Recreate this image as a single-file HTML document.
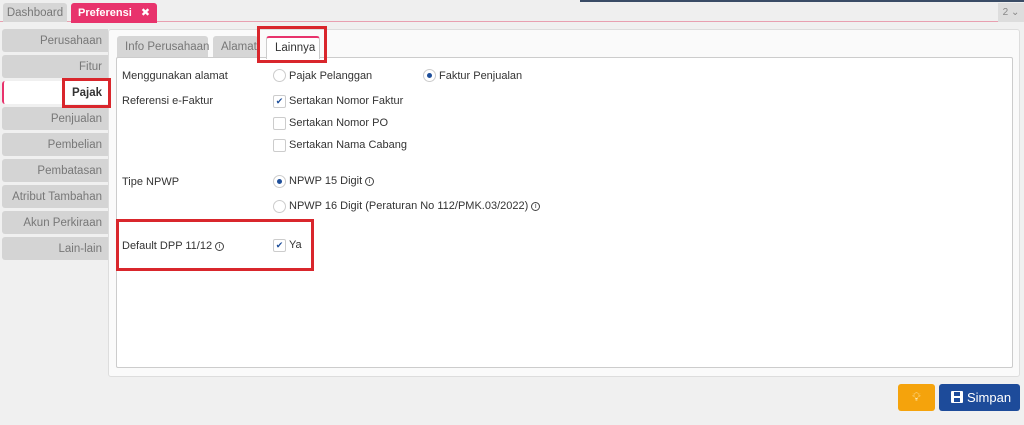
<!DOCTYPE html>
<html><head><style>
*{margin:0;padding:0;box-sizing:border-box}
body{width:1024px;height:425px;background:#f0f0f0;font-family:"Liberation Sans","DejaVu Sans",sans-serif;font-size:11px;color:#333;position:relative;overflow:hidden}
div,span{white-space:nowrap}
.a{position:absolute}
.side{position:absolute;left:2px;width:106px;height:23px;background:#d4d4d4;border-radius:3px 0 0 3px;color:#777;text-align:right;padding-right:6px;line-height:24px;font-size:11.5px}
.tab{position:absolute;top:36px;height:22px;background:#d6d6d6;border-radius:3px 3px 0 0;color:#777;line-height:23px;padding:0 8px;font-size:11.5px}
.lbl{position:absolute;left:122px;font-size:11px;color:#333}
.rd{position:absolute;width:13px;height:13px;border:1px solid #ccc;border-radius:50%;background:#fff}
.rd.on::after{content:"";position:absolute;left:3px;top:3px;width:5px;height:5px;border-radius:50%;background:#1f4f9a}
.cb{position:absolute;width:13px;height:13px;border:1px solid #ccc;border-radius:2px;background:#fff;color:#1f4f9a;font-size:9px;line-height:11px;text-align:center}
.t{position:absolute;font-size:11px;color:#333}
.red{position:absolute;border:3px solid #d9262c}
.i{display:inline-block;width:9px;height:9px;border:1px solid #444;border-radius:50%;font-size:7px;line-height:8px;text-align:center;vertical-align:1px;margin-left:3px}
</style></head><body>
<div class="a" style="left:0;top:0;width:1024px;height:22px;background:#efefef;border-bottom:1px solid #e8a0b0"></div>
<div class="a" style="left:580px;top:0;width:444px;height:2px;background:#3a4c66"></div>
<div class="a" style="left:3px;top:3px;width:64px;height:19px;background:#d6d6d6;border-radius:3px 3px 0 0;color:#777;line-height:20px;text-align:center;font-size:11.5px">Dashboard</div>
<div class="a" style="left:71px;top:3px;width:86px;height:20px;background:#e8336c;border-radius:3px 3px 0 0;color:#fff;line-height:20px;padding-left:7px;font-weight:bold;font-size:11px">Preferensi <span style="margin-left:6px">✖</span></div>
<div class="a" style="left:998px;top:3px;width:26px;height:19px;background:#ddd;color:#888;line-height:19px;text-align:center;font-size:10px">2 ⌄</div>

<div class="side" style="top:29px">Perusahaan</div>
<div class="side" style="top:55px">Fitur</div>
<div class="side" style="top:81px;background:#fff;border-left:2px solid #e8336c;color:#333;font-weight:bold">Pajak</div>
<div class="side" style="top:107px">Penjualan</div>
<div class="side" style="top:133px">Pembelian</div>
<div class="side" style="top:159px">Pembatasan</div>
<div class="side" style="top:185px">Atribut Tambahan</div>
<div class="side" style="top:211px">Akun Perkiraan</div>
<div class="side" style="top:237px">Lain-lain</div>

<div class="a" style="left:108px;top:29px;width:912px;height:348px;background:#fafafa;border:1px solid #ddd;border-radius:3px"></div>
<div class="tab" style="left:117px;width:91px">Info Perusahaan</div>
<div class="tab" style="left:213px;width:45px">Alamat</div>
<div class="tab" style="left:266px;width:54px;background:#fff;color:#333;border:1px solid #ccc;border-top:2px solid #e8336c;border-bottom:none;height:23px;z-index:2;line-height:21px">Lainnya</div>
<div class="a" style="left:116px;top:57px;width:897px;height:311px;background:#fff;border:1px solid #ccc;border-radius:2px"></div>

<div class="lbl" style="top:70px">Menggunakan alamat</div>
<div class="rd" style="left:273px;top:69px"></div><div class="t" style="left:289px;top:70px">Pajak Pelanggan</div>
<div class="rd on" style="left:423px;top:69px"></div><div class="t" style="left:439px;top:70px">Faktur Penjualan</div>
<div class="lbl" style="top:95px">Referensi e-Faktur</div>
<div class="cb" style="left:273px;top:95px">✔</div><div class="t" style="left:289px;top:95px">Sertakan Nomor Faktur</div>
<div class="cb" style="left:273px;top:117px"></div><div class="t" style="left:289px;top:117px">Sertakan Nomor PO</div>
<div class="cb" style="left:273px;top:139px"></div><div class="t" style="left:289px;top:139px">Sertakan Nama Cabang</div>
<div class="lbl" style="top:176px">Tipe NPWP</div>
<div class="rd on" style="left:273px;top:175px"></div><div class="t" style="left:289px;top:175px">NPWP 15 Digit<span class="i">i</span></div>
<div class="rd" style="left:273px;top:200px"></div><div class="t" style="left:289px;top:200px">NPWP 16 Digit (Peraturan No 112/PMK.03/2022)<span class="i">i</span></div>
<div class="lbl" style="top:240px">Default DPP 11/12<span class="i">i</span></div>
<div class="cb" style="left:273px;top:239px">✔</div><div class="t" style="left:289px;top:239px">Ya</div>

<div class="red" style="left:62px;top:78px;width:49px;height:30px"></div>
<div class="red" style="left:257px;top:26px;width:70px;height:37px;z-index:3"></div>
<div class="red" style="left:116px;top:219px;width:198px;height:52px"></div>

<div class="a" style="left:898px;top:384px;width:37px;height:27px;background:#f5a30c;border-radius:3px;color:#fde8b0;text-align:center;line-height:27px;font-size:12px">💡︎</div>
<div class="a" style="left:939px;top:384px;width:81px;height:27px;background:#1d4b9a;border-radius:3px;color:#fff;line-height:27px;font-size:13px;padding-left:12px"><span style="display:inline-block;width:12px;height:12px;background:#fff;border-radius:1px;vertical-align:-1px;margin-right:4px;position:relative"><span style="position:absolute;left:3px;top:1px;width:6px;height:4px;background:#1d4b9a"></span><span style="position:absolute;left:3px;top:7px;width:6px;height:4px;background:#1d4b9a"></span></span>Simpan</div>
</body></html>
